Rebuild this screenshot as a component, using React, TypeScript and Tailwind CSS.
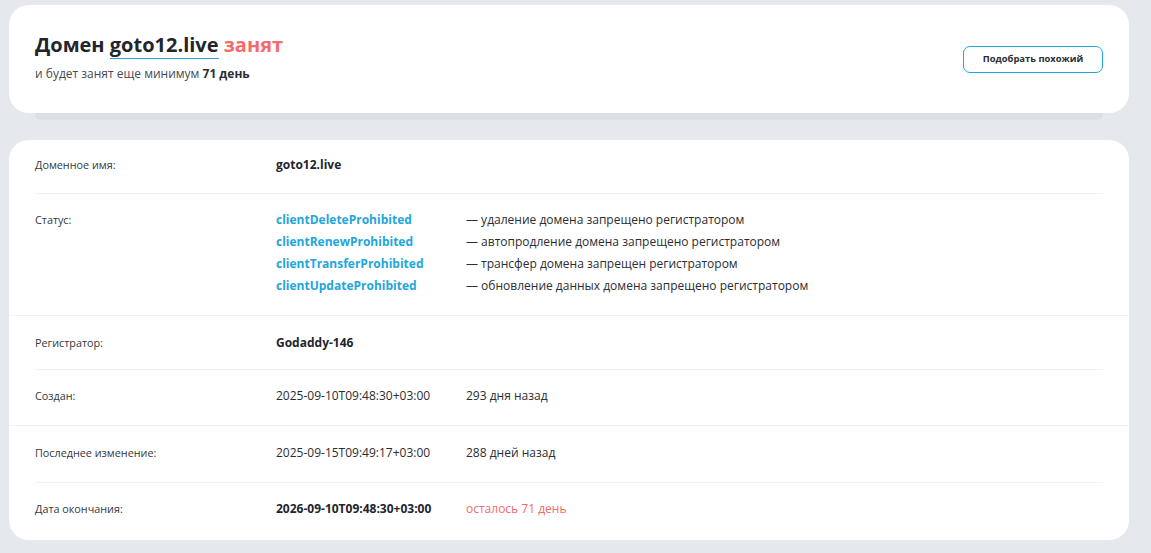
import React from "react";

const statuses = [
  ["clientDeleteProhibited", "— удаление домена запрещено регистратором"],
  ["clientRenewProhibited", "— автопродление домена запрещено регистратором"],
  ["clientTransferProhibited", "— трансфер домена запрещен регистратором"],
  ["clientUpdateProhibited", "— обновление данных домена запрещено регистратором"],
];

function Row({
  label,
  children,
  h,
  last,
  full,
}: {
  label: string;
  children: React.ReactNode;
  h: string;
  last?: boolean;
  full?: boolean;
}) {
  return (
    <div className={full ? "" : "px-[26px]"}>
      <div
        className={`flex items-start ${h} ${full ? "px-[26px]" : ""} ${
          last ? "" : "border-b border-[#eff1f3]"
        }`}
      >
        <div className="w-[241px] shrink-0 text-[10.8px] leading-[22px] text-[#333740]">{label}</div>
        <div className="flex-1">{children}</div>
      </div>
    </div>
  );
}

export default function App() {
  return (
    <div
      className="min-h-[553px] w-[1151px] bg-[#e5e9ed] pt-[5px] pl-[9px] pr-[22px] pb-[13px]"
      style={{ fontFamily: '"Open Sans", "Noto Sans", sans-serif' }}
    >
      <div className="relative">
        <div className="relative z-10 flex h-[108px] items-center justify-between rounded-[20px] bg-white px-[26px]">
          <div className="-mt-[5px]">
            <h1 className="text-[20px] font-bold leading-[28px] text-[#22252b]">
              Домен{" "}
              <span className="border-b-[1.5px] border-[#2aa4d6]">goto12.live</span>{" "}
              <span className="text-[#f56b6b]">занят</span>
            </h1>
            <p className="mt-[7px] text-[12px] leading-[16px] text-[#464a52]">
              и будет занят еще минимум <b className="font-bold text-[#2a2d33]">71 день</b>
            </p>
          </div>
          <button className="flex h-[27px] w-[140px] items-center justify-center rounded-[7px] border border-[#1fa8dc] bg-white text-[9.4px] font-bold text-[#2a2d33]">
            Подобрать похожий
          </button>
        </div>
        <div className="mx-[26px] h-[7px] rounded-b-[6px] bg-[#dbe0e5]" />
      </div>

      <div className="mt-[20px] rounded-[20px] bg-white">
        <Row label="Доменное имя:" h="h-[54px] pt-[14px]">
          <div className="text-[12px] font-bold leading-[22px] text-[#22252b]">goto12.live</div>
        </Row>
        <Row label="Статус:" h="h-[122px] pt-[15px]" full>
          <div className="flex flex-col">
            {statuses.map(([s, d]) => (
              <div key={s} className="flex text-[12px] leading-[22px]">
                <span className="w-[190px] font-bold text-[#22a6db]">{s}</span>
                <span className="text-[#2a2d33]">{d}</span>
              </div>
            ))}
          </div>
        </Row>
        <Row label="Регистратор:" h="h-[54px] pt-[16px]">
          <div className="text-[12px] font-bold leading-[22px] text-[#22252b]">Godaddy-146</div>
        </Row>
        <Row label="Создан:" h="h-[56px] pt-[15px]" full>
          <div className="flex text-[12px] leading-[22px] text-[#2a2d33]">
            <span className="w-[190px]">2025-09-10T09:48:30+03:00</span>
            <span>293 дня назад</span>
          </div>
        </Row>
        <Row label="Последнее изменение:" h="h-[57px] pt-[16px]">
          <div className="flex text-[12px] leading-[22px] text-[#2a2d33]">
            <span className="w-[190px]">2025-09-15T09:49:17+03:00</span>
            <span>288 дней назад</span>
          </div>
        </Row>
        <Row label="Дата окончания:" h="h-[57px] pt-[15px]" last>
          <div className="flex text-[12px] leading-[22px]">
            <span className="w-[190px] font-bold text-[#22252b]">2026-09-10T09:48:30+03:00</span>
            <span className="text-[#f56b6b]">осталось 71 день</span>
          </div>
        </Row>
      </div>
    </div>
  );
}
